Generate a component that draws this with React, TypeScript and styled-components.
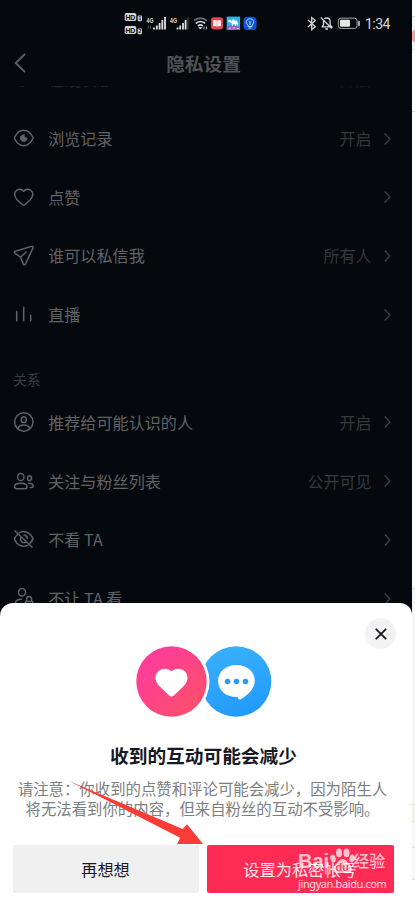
import React from "react";
import styled, { createGlobalStyle } from "styled-components";

const GlobalStyle = createGlobalStyle`
  * { box-sizing: border-box; }
  body {
    margin: 0;
    background: #fff;
    overflow: hidden;
    font-family: "Noto Sans CJK SC", "Noto Sans", sans-serif;
  }
  svg { display: block; flex: none; }
`;

const Page = styled.div`
  position: relative;
  display: flex;
  width: 415px;
  height: 901px;
  overflow: hidden;
`;

const Phone = styled.main`
  display: flex;
  flex-direction: column;
  width: 412px;
  height: 901px;
  background: #05080c;
`;

const StatusBar = styled.div`
  display: flex;
  align-items: center;
  height: 46px;
  padding: 0 22px 0 124px;
  color: #d8d8da;
`;

const StatusSpacer = styled.div`
  flex: 1;
`;

const Clock = styled.time`
  width: 25px;
  margin-left: 4px;
  padding-top: 1px;
  font: 14px/20px Roboto, sans-serif;
  letter-spacing: -0.55px;
  white-space: nowrap;
`;

const Header = styled.header`
  display: grid;
  grid-template-columns: 40px 1fr 40px;
  align-items: center;
  height: 40px;
  padding: 0 8px 7px 3px;
  color: #606164;
`;

const BackButton = styled.button`
  display: flex;
  justify-content: center;
  border: 0;
  padding: 0 6px 0 0;
  background: none;
  color: inherit;
`;

const PageTitle = styled.h1`
  margin: 0;
  font-size: 18.7px;
  font-weight: 700;
  line-height: 28px;
  text-align: center;
  color: #505154;
`;

const Scroller = styled.section`
  height: 517px;
  overflow: hidden;
`;

const Rows = styled.div`
  margin-top: -35px;
`;

const Row = styled.div<{ $faded?: boolean }>`
  display: flex;
  align-items: center;
  height: 58.7px;
  padding: 0 21.5px 0 13px;
  color: #626366;
  opacity: ${(p) => (p.$faded ? 0.3 : 1)};
`;

const RowLabel = styled.span`
  flex: 1;
  margin-left: 13.2px;
  padding-bottom: 2px;
  font-size: 16.1px;
  line-height: 24px;
  white-space: nowrap;
`;

const RowValue = styled.span`
  margin-right: 12px;
  padding-bottom: 2px;
  font-size: 16px;
  line-height: 24px;
  color: #37393c;
`;

const SectionLabel = styled.h2`
  height: 49.2px;
  margin: 0;
  padding: 24.5px 0 0 13px;
  font-size: 13.7px;
  font-weight: 400;
  line-height: 20px;
  color: #3c3e41;
`;

const Sheet = styled.section`
  display: flex;
  flex-direction: column;
  height: 298px;
  padding: 15px 18px 8px 13px;
  border-radius: 13px 12px 0 0;
  background: #fff;
  color: #161823;
`;

const CloseButton = styled.button`
  display: flex;
  align-items: center;
  justify-content: center;
  align-self: flex-end;
  width: 31px;
  height: 31px;
  margin-right: -2px;
  border: 0;
  border-radius: 50%;
  padding: 0;
  background: #f3f3f3;
`;

const Artwork = styled.div`
  display: flex;
  justify-content: center;
  margin-top: -4px;
`;

const SheetTitle = styled.h2`
  margin: 24px 0 0;
  font-size: 18.7px;
  font-weight: 700;
  line-height: 28px;
  text-align: center;
`;

const SheetText = styled.p`
  margin: 9px -5px 0 -7px;
  font-size: 15.4px;
  line-height: 20px;
  text-align: center;
  white-space: nowrap;
  color: #7d7e80;
`;

const Actions = styled.div`
  display: grid;
  grid-template-columns: 186px 187px;
  gap: 8px;
  margin-top: auto;
`;

const ActionButton = styled.button<{ $primary?: boolean }>`
  height: 48px;
  border: 0;
  border-radius: 2px;
  padding: 0 1px 1px 0;
  background: ${(p) => (p.$primary ? "#fe2c55" : "#f0f0f0")};
  color: ${(p) => (p.$primary ? "#ffe9ee" : "#161823")};
  font: 16.2px/24px "Noto Sans CJK SC", sans-serif;
`;

const Gutter = styled.aside`
  display: flex;
  flex-direction: column;
  width: 3px;
  background: #fff;
`;

const GutterCell = styled.div<{ $h: number; $bg?: string }>`
  display: flex;
  align-items: center;
  height: ${(p) => p.$h}px;
  border-bottom: 1px solid #d9d9d9;
  background: ${(p) => p.$bg ?? "#fff"};
`;

const GutterMark = styled.div`
  width: 3px;
  height: 12px;
  margin-top: 6px;
  border-radius: 3px 0 0 3px;
  background: #f3a2a5;
`;

const ArrowOverlay = styled.svg`
  position: absolute;
  left: 64px;
  top: 776px;
`;

const Watermark = styled.div`
  position: absolute;
  left: 298px;
  top: 846px;
  width: 92px;
  color: rgba(255, 255, 255, 0.72);
`;

const WatermarkBrand = styled.div`
  display: flex;
  align-items: center;
  height: 29px;
  font: 700 20px/26px "Liberation Sans", sans-serif;
`;

const WatermarkName = styled.span`
  margin: -2px 0 0 -3px;
  font: 500 16px/26px "Noto Sans CJK SC", sans-serif;
`;

const WatermarkUrl = styled.div`
  font: 11px/17px "Noto Sans", sans-serif;
  letter-spacing: -0.4px;
  white-space: nowrap;
  color: rgba(255, 255, 255, 0.85);
`;

function LineIcon({ children }: { children: React.ReactNode }) {
  return (
    <svg width="22" height="22" viewBox="0 0 22 22" fill="none" stroke="currentColor"
      strokeWidth="1.5" strokeLinecap="round" strokeLinejoin="round">
      {children}
    </svg>
  );
}

const icons = {
  status: <LineIcon><circle cx="9" cy="10" r="7" /></LineIcon>,
  eye: (
    <LineIcon>
      <path d="M1.3 10C3.5 5.2 6.9 2.3 10.7 2.3S18 5.2 20.2 10c-2.2 4.8-5.7 7.7-9.5 7.7S3.5 14.8 1.3 10Z" />
      <path d="M11.2 6.7a3.5 3.5 0 1 0 3 3.1c-1.8.8-3.7-1.1-3-3.1Z" fill="currentColor" strokeWidth=".6" />
    </LineIcon>
  ),
  heart: (
    <LineIcon>
      <path d="M10.7 4.3C8.7 1.3 4.3 1.7 2.4 4.7c-1.6 2.8-.4 5.8 1.7 8l5.4 5.1c.8.7 1.6.7 2.4 0l5.4-5.1c2.1-2.2 3.3-5.2 1.7-8-1.9-3-6.3-3.4-8.3-.4Z" />
    </LineIcon>
  ),
  plane: (
    <LineIcon>
      <path d="M18.4 1.4 2.3 6.2c-1 .3-1.2 1.3-.4 1.9l5 3.6c.6.4.8.8 1 1.4l2.5 6c.4 1 1.5 1 2 .1L20 3c.5-1-.4-2-1.6-1.6ZM7.7 12l5.4-5" />
    </LineIcon>
  ),
  bars: <LineIcon><path d="M3.7 7.5v9.3M10.7 3.3v13.5M17.7 11.3v5.5" /></LineIcon>,
  person: (
    <LineIcon>
      <circle cx="10.8" cy="10" r="9.2" />
      <ellipse cx="10.8" cy="7.7" rx="2.5" ry="2.9" />
      <path d="M4.9 16.6c1-3 2.6-3.6 5.9-3.6s5 .6 5.9 3.6" />
    </LineIcon>
  ),
  people: (
    <LineIcon>
      <ellipse cx="7.8" cy="6" rx="3.2" ry="3.6" />
      <path d="M7.8 12.3c-3.7 0-6.2 1-6.2 3.4 0 1.5.9 2 2.2 2h8c1.3 0 2.2-.5 2.2-2 0-2.4-2.5-3.4-6.2-3.4Z" />
      <ellipse cx="16.5" cy="7.2" rx="2" ry="2.4" />
      <path d="M15.7 12.3c2.7 0 4.5 1 4.5 2.8 0 1-.8 1.5-2 1.5h-.7" />
    </LineIcon>
  ),
  eyeOff: (
    <LineIcon>
      <path d="M6.5 3.7c1.2-.7 2.7-1.1 4.2-1.1 3.9 0 7.3 2.7 9.4 7.3a14 14 0 0 1-3 4.2M14.9 16.2c-1.3.7-2.7 1.1-4.2 1.1-3.9 0-7.3-2.8-9.4-7.4a15 15 0 0 1 3-4.2M2 2l17 16M8.1 7.9a3.7 3.7 0 0 0 4.8 5.3M11 6.2c1.9 0 3.3 1.4 3.5 3.2" />
    </LineIcon>
  ),
  personLock: (
    <LineIcon>
      <ellipse cx="9" cy="4.3" rx="3.5" ry="3.8" />
      <path d="M2.1 16c.2-3.6 2.6-4.7 6.3-4.7M12.500 13.500h7.200v5h-7.200zM13.700 13.400V11a2.400 2.400 0 0 1 4.800 0v2.400" />
    </LineIcon>
  ),
};

function Chevron() {
  return (
    <svg width="7" height="13" viewBox="0 0 7 13" fill="none" stroke="#414245" strokeWidth="1.3">
      <path d="m.7 .5 5.2 5.5L.7 11.500" />
    </svg>
  );
}

type Setting = { icon: keyof typeof icons; label: string; value?: string; faded?: boolean };

const general: Setting[] = [
  { icon: "status", label: "在线状态", value: "开启", faded: true },
  { icon: "eye", label: "浏览记录", value: "开启" },
  { icon: "heart", label: "点赞" },
  { icon: "plane", label: "谁可以私信我", value: "所有人" },
  { icon: "bars", label: "直播" },
];

const relations: Setting[] = [
  { icon: "person", label: "推荐给可能认识的人", value: "开启" },
  { icon: "people", label: "关注与粉丝列表", value: "公开可见" },
  { icon: "eyeOff", label: "不看 TA" },
  { icon: "personLock", label: "不让 TA 看" },
];

function SettingRow({ icon, label, value, faded }: Setting) {
  return (
    <Row $faded={faded}>
      {icons[icon]}
      <RowLabel>{label}</RowLabel>
      {value && <RowValue>{value}</RowValue>}
      <Chevron />
    </Row>
  );
}

function ConnectivityIcons() {
  return (
    <svg width="134" height="26" viewBox="124 10 134 26" fill="none">
      <g fill="#d4d4d5">
        <rect x="124.700" y="13" width="11.600" height="8" rx="1.800" />
        <rect x="137.700" y="15.500" width="4.300" height="5.700" rx="1" />
        <rect x="124.700" y="26" width="11.600" height="8" rx="1.800" />
        <rect x="137.700" y="28.500" width="4.300" height="5.700" rx="1" />
      </g>
      <g fill="#090c10" fontFamily="Liberation Sans" fontWeight="700">
        <text x="125.600" y="19.600" fontSize="7" textLength="9.800">HD</text>
        <text x="138.400" y="20.300" fontSize="5">1</text>
        <text x="125.600" y="32.600" fontSize="7" textLength="9.800">HD</text>
        <text x="138.400" y="33.300" fontSize="5">2</text>
      </g>
      <g fill="#dedede" fontFamily="Liberation Sans" fontWeight="700" fontSize="6.500">
        <text x="146.500" y="22.500" textLength="7" lengthAdjust="spacingAndGlyphs">4G</text>
        <text x="170" y="22.500" textLength="7" lengthAdjust="spacingAndGlyphs">4G</text>
      </g>
      <path d="M148.200 29v-3.500M150.500 25.500V29" stroke="#4a4c4f" />
      <path d="M154 29.500v-2M156.800 29.500v-4M159.600 29.500v-6.500M162.300 29.500v-9.500M165 29.500V17M177.500 29.500v-2M180.200 29.500v-4M183 29.500v-6.500M185.600 29.500v-9.500" stroke="#e1e1e1" strokeWidth="1.800" />
      <path d="M188 29.500V17" stroke="#37393c" strokeWidth="1.500" />
      <g stroke="#ddd" strokeWidth="1.600" strokeLinecap="round">
        <path d="M194.500 20.200q5.900-4 11.800 0" stroke="#76787b" />
        <path d="M196.300 23q4.100-3 8.200 0M198.300 25.600q2.100-1.500 4.200 0" />
      </g>
      <path d="m200.400 29-1.500-1.500h3zM204 26.500v3M206.500 26.500v3" fill="#ddd" stroke="#ddd" strokeWidth=".8" />
      <rect x="211" y="17.200" width="12" height="12.200" rx="2.700" fill="#e24350" />
      <path d="M213 20.400q2-.8 4 .2 2-1 4-.2v6q-2-.7-4 .2-2-.9-4-.2z" fill="#fde9ea" />
      <path d="M217 20.500v6" stroke="#e99" strokeWidth=".6" />
      <rect x="226.700" y="16.600" width="13.400" height="13.400" fill="#28b9e3" />
      <path d="M226.700 26.500q6-2.500 13.400.3V30h-13.400z" fill="#9565d2" />
      <path d="m228 20.500 2.500-.8 1 1.600 1.800-2.600 1.500 2 1.700-.4 1.200 2.200.3 3.500-1.200-2-1 2.500-1-2.300h-1.600l-1 2.300-.6-3.200-2-1.200-1.500-.3z" fill="#fff" />
      <path d="M229 28.300h2M233 28h2M237 28.500h2" stroke="#ddc7ff" />
      <rect x="243.300" y="16.800" width="13.300" height="13.200" rx="4" fill="#0b51d8" />
      <path d="M248 25.200c-3.500-3-1.200-6.400 2-6.400s5.500 3.400 2 6.400v1.200h-4zM248.600 28h2.800M250 25v-2.500l-1.200-1M250 22.500l1.200-1" stroke="#dbe7ff" strokeWidth=".9" />
    </svg>
  );
}

function DeviceIcons() {
  return (
    <svg width="54" height="18" viewBox="307 14 54 18" fill="none" stroke="#d5d5d7" strokeWidth="1.300">
      <path d="m308 20 7.300 6.800-3.600 2.800v-12l3.600 2.900L308 27" />
      <path d="M321.800 26.800h10l-1.700-2v-3.500c0-2-1.300-3.300-3.400-3.300-1 0-1.800.3-2.300.8M323.500 20.500v4.500l-1.700 1.800M325.300 29h2.700M320.800 17.500l11 11" />
      <rect x="338.400" y="18.200" width="18.700" height="10.200" rx="2.500" stroke="#a4a5a8" strokeWidth="1" />
      <rect x="340" y="19.800" width="10" height="7" rx="1" fill="#e5e5e6" stroke="none" />
      <path d="M359 21v5" strokeWidth="1.500" />
    </svg>
  );
}

function InteractionArt() {
  return (
    <svg width="136" height="72" viewBox="136 645.500 136 72">
      <defs>
        <linearGradient id="pink" x1="0" y1="0" x2="1" y2="1">
          <stop offset="0" stopColor="#fb38a4" />
          <stop offset="1" stopColor="#fe5264" />
        </linearGradient>
        <linearGradient id="blue" x1=".3" y1="0" x2=".6" y2="1">
          <stop offset="0" stopColor="#39b0fb" />
          <stop offset="1" stopColor="#229afb" />
        </linearGradient>
      </defs>
      <circle cx="236" cy="682" r="35.300" fill="url(#blue)" />
      <circle cx="171.500" cy="682" r="38" fill="#fff" />
      <circle cx="171.500" cy="682" r="35.200" fill="url(#pink)" />
      <path d="M171.500 672c-3.500-4-10-3.600-13.700.3-4 4.500-2.400 10.200 1.500 14.200 3.200 3.500 6.900 6.500 9.800 9.400 1.700 1.500 3.100 1.500 4.800 0 2.900-2.900 6.600-5.900 9.800-9.400 3.900-4 5.500-9.700 1.500-14.200-3.700-3.900-10.200-4.300-13.700-.3Z" fill="#fff" />
      <path d="M236.500 665.500c10.500 0 18.300 6.700 18.300 15.800 0 7.700-6.400 14-14 18.500-1.400.8-2.800.1-3-2.200-11.600.5-19.700-6.600-19.700-16.300 0-9.100 7.900-15.800 18.400-15.800Z" fill="#fff" />
      <g fill="#2b9cec">
        <circle cx="227.600" cy="682" r="2.800" />
        <circle cx="236.500" cy="682" r="2.800" />
        <circle cx="245.500" cy="682" r="2.800" />
      </g>
    </svg>
  );
}

function Paw() {
  return (
    <svg width="27" height="28" viewBox="0 0 27 28" fill="currentColor">
      <ellipse cx="10" cy="6" rx="3" ry="4.400" />
      <ellipse cx="17.500" cy="6" rx="3" ry="4.400" />
      <ellipse cx="4" cy="11.500" rx="2.700" ry="4" transform="rotate(-15 4 11.500)" />
      <ellipse cx="23" cy="11.500" rx="2.700" ry="4" transform="rotate(15 23 11.500)" />
      <path d="M13.600 12c3.800 0 4.600 3.300 7 5.300 3.800 3.200 2.800 9.500-2.300 9-3-.4-6-.4-9.200 0-5.100.5-6.100-5.800-2.300-9 2.300-2 3-5.300 6.800-5.300Z" />
      <text x="6.500" y="24" fontFamily="Liberation Sans" fontSize="11" fontWeight="700" fill="#fe4165">du</text>
    </svg>
  );
}

export default function App() {
  return (
    <Page>
      <GlobalStyle />
      <Phone>
        <StatusBar>
          <ConnectivityIcons />
          <StatusSpacer />
          <DeviceIcons />
          <Clock>1:34</Clock>
        </StatusBar>
        <Header>
          <BackButton aria-label="返回">
            <svg width="12" height="20" viewBox="0 0 12 20" fill="none" stroke="currentColor" strokeWidth="1.800">
              <path d="m11 1-9.300 9L11 19" />
            </svg>
          </BackButton>
          <PageTitle>隐私设置</PageTitle>
        </Header>
        <Scroller>
          <Rows>
            {general.map((item) => <SettingRow key={item.label} {...item} />)}
            <SectionLabel>关系</SectionLabel>
            {relations.map((item) => <SettingRow key={item.label} {...item} />)}
          </Rows>
        </Scroller>
        <Sheet role="dialog">
          <CloseButton aria-label="关闭">
            <svg width="12" height="12" viewBox="0 0 12 12" stroke="#161823" strokeWidth="1.800" strokeLinecap="round">
              <path d="m1.300 1.300 9.400 9.400m0-9.400-9.400 9.400" />
            </svg>
          </CloseButton>
          <Artwork><InteractionArt /></Artwork>
          <SheetTitle>收到的互动可能会减少</SheetTitle>
          <SheetText>
            请注意：你收到的点赞和评论可能会减少，因为陌生人
            <br />
            将无法看到你的内容，但来自粉丝的互动不受影响。
          </SheetText>
          <Actions>
            <ActionButton>再想想</ActionButton>
            <ActionButton $primary>设置为私密帐号</ActionButton>
          </Actions>
        </Sheet>
      </Phone>
      <Gutter>
        <GutterCell $h={17} />
        <GutterCell $h={33} $bg="#f8f8f8"><GutterMark /></GutterCell>
        <GutterCell $h={62} />
        <GutterCell $h={477} />
        <GutterCell $h={216} $bg="#f6f6f6" />
        <GutterCell $h={17} $bg="#f2f2e9" />
        <GutterCell $h={26} $bg="#f8f8f8" />
        <GutterCell $h={32} $bg="#f8f8f8" />
      </Gutter>
      <ArrowOverlay width="142" height="70" viewBox="64 776 142 70">
        <path d="m69 781 113.700 48 4.300-4.700L203 844h-26l3.200-6.300Z" fill="#fb3b36" />
      </ArrowOverlay>
      <Watermark>
        <WatermarkBrand>
          Bai
          <Paw />
          <WatermarkName>经验</WatermarkName>
        </WatermarkBrand>
        <WatermarkUrl>jingyan.baidu.com</WatermarkUrl>
      </Watermark>
    </Page>
  );
}
